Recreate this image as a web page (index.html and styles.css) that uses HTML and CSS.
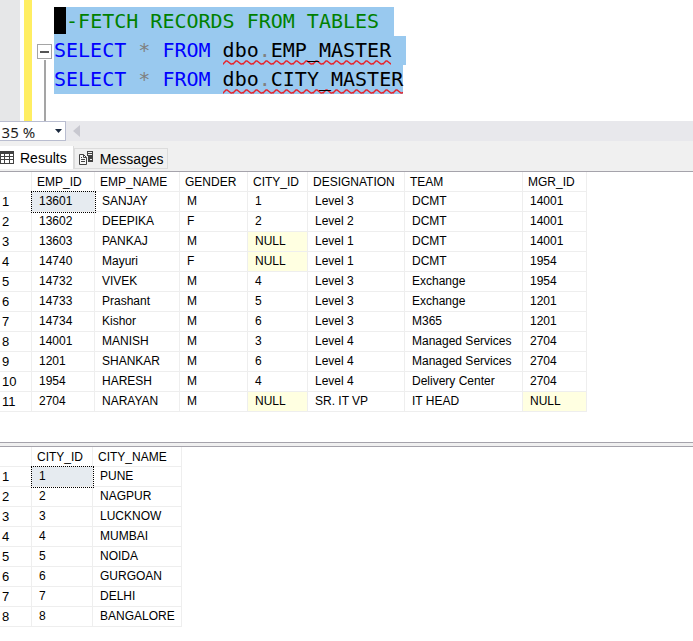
FILE: index.html
```html
<!DOCTYPE html>
<html lang="en">
  <head>
    <meta charset="UTF-8" />
    <meta name="viewport" content="width=device-width, initial-scale=1.0" />
    <title>Query Results</title>
    <link rel="stylesheet" href="styles.css">
  </head>
  <body>
    <!-- editor -->
    <div class="editor">
      <div class="margin"></div>
      <div class="changes"></div>
      <div class="outline">
        <button class="fold" aria-label="Collapse"></button>
        <div class="fold-line"></div>
      </div>
      <div class="code">
        <div class="line"><span class="caret">-</span><span class="comment">-FETCH RECORDS FROM TABLES</span></div>
        <div class="line"><span class="keyword">SELECT</span> <span class="op">*</span> <span class="keyword">FROM</span> <span class="error">dbo<span class="op">.</span>EMP_MASTER</span></div>
        <div class="line last"><span class="keyword">SELECT</span> <span class="op">*</span> <span class="keyword">FROM</span> <span class="error">dbo<span class="op">.</span>CITY_MASTER</span></div>
      </div>
    </div>

    <div class="zoom-bar">
      <select class="zoom" aria-label="Zoom">
        <option>135 %</option>
      </select>
      <button class="scroll-left" aria-label="Scroll left"></button>
    </div>

    <!-- tabs -->
    <div class="tabs">
      <button class="tab active">
        <svg width="14" height="13" viewBox="0 0 14 13">
          <path d="M0 0h14v13H0z" fill="#424242" />
          <path d="M1 3h3v2H1zM5 3h4v2H5zM10 3h3v2h-3zM1 6h3v2H1zM5 6h4v2H5zM10 6h3v2h-3zM1 9h3v3H1zM5 9h4v3H5zM10 9h3v3h-3z" fill="#fff" />
        </svg>
        Results
      </button>
      <button class="tab">
        <svg width="15" height="15" viewBox="0 0 15 15">
          <path d="M8 0h6v11H9V5H8z" fill="#424242" />
          <path d="M9 1.500h4M9 3.500h4" stroke="#f0f0f0" fill="none" />
          <path d="M11 8h2v1h-2z" fill="#f0f0f0" />
          <path d="M.5 3.500h4l3 3v7h-7z" fill="#f6f6f6" stroke="#424242" />
          <path d="M4.500 3.500v3h3M2 8.500h4M2 10.500h4M2 6.500h1" stroke="#424242" fill="none" />
        </svg>
        Messages
      </button>
    </div>

    <!-- results -->
    <div class="pane">
      <table class="grid">
        <colgroup>
          <col class="w-num"><col class="w-emp"><col class="w-name"><col class="w-gender"><col class="w-city"><col class="w-desig"><col class="w-team"><col class="w-mgr">
        </colgroup>
        <thead>
          <tr><th></th><th>EMP_ID</th><th>EMP_NAME</th><th>GENDER</th><th>CITY_ID</th><th>DESIGNATION</th><th>TEAM</th><th>MGR_ID</th></tr>
        </thead>
        <tbody>
          <tr><th>1</th><td class="selected">13601</td><td>SANJAY</td><td>M</td><td>1</td><td>Level 3</td><td>DCMT</td><td>14001</td></tr>
          <tr><th>2</th><td>13602</td><td>DEEPIKA</td><td>F</td><td>2</td><td>Level 2</td><td>DCMT</td><td>14001</td></tr>
          <tr><th>3</th><td>13603</td><td>PANKAJ</td><td>M</td><td class="null">NULL</td><td>Level 1</td><td>DCMT</td><td>14001</td></tr>
          <tr><th>4</th><td>14740</td><td>Mayuri</td><td>F</td><td class="null">NULL</td><td>Level 1</td><td>DCMT</td><td>1954</td></tr>
          <tr><th>5</th><td>14732</td><td>VIVEK</td><td>M</td><td>4</td><td>Level 3</td><td>Exchange</td><td>1954</td></tr>
          <tr><th>6</th><td>14733</td><td>Prashant</td><td>M</td><td>5</td><td>Level 3</td><td>Exchange</td><td>1201</td></tr>
          <tr><th>7</th><td>14734</td><td>Kishor</td><td>M</td><td>6</td><td>Level 3</td><td>M365</td><td>1201</td></tr>
          <tr><th>8</th><td>14001</td><td>MANISH</td><td>M</td><td>3</td><td>Level 4</td><td>Managed Services</td><td>2704</td></tr>
          <tr><th>9</th><td>1201</td><td>SHANKAR</td><td>M</td><td>6</td><td>Level 4</td><td>Managed Services</td><td>2704</td></tr>
          <tr><th>10</th><td>1954</td><td>HARESH</td><td>M</td><td>4</td><td>Level 4</td><td>Delivery Center</td><td>2704</td></tr>
          <tr><th>11</th><td>2704</td><td>NARAYAN</td><td>M</td><td class="null">NULL</td><td>SR. IT VP</td><td>IT HEAD</td><td class="null">NULL</td></tr>
        </tbody>
      </table>
    </div>
    <div class="splitter"></div>
    <div class="pane">
      <table class="grid">
        <colgroup>
          <col class="w-num"><col class="w-id"><col class="w-cname">
        </colgroup>
        <thead>
          <tr><th></th><th>CITY_ID</th><th>CITY_NAME</th></tr>
        </thead>
        <tbody>
          <tr><th>1</th><td class="selected">1</td><td>PUNE</td></tr>
          <tr><th>2</th><td>2</td><td>NAGPUR</td></tr>
          <tr><th>3</th><td>3</td><td>LUCKNOW</td></tr>
          <tr><th>4</th><td>4</td><td>MUMBAI</td></tr>
          <tr><th>5</th><td>5</td><td>NOIDA</td></tr>
          <tr><th>6</th><td>6</td><td>GURGOAN</td></tr>
          <tr><th>7</th><td>7</td><td>DELHI</td></tr>
          <tr><th>8</th><td>8</td><td>BANGALORE</td></tr>
        </tbody>
      </table>
    </div>
  </body>
</html>
```
FILE: styles.css
```css
* {
  box-sizing: border-box;
}

body {
  margin: 0;
  background: #fff;
  color: #000;
  font-family: "Liberation Sans", Arial, sans-serif;
  font-size: 12px;
  overflow-x: hidden;
}

button {
  margin: 0;
  padding: 0;
  background: none;
  border: none;
  font-family: inherit;
}

/* editor */
.editor {
  display: flex;
}

.margin {
  width: 20px;
  background: #e6e7e8;
}

.changes {
  width: 8px;
  margin-left: 4px;
  background: #ffee62;
}

.outline {
  display: flex;
  flex-direction: column;
  width: 22px;
  padding: 44px 0 0 5px;
}

.fold {
  display: flex;
  align-items: center;
  justify-content: center;
  width: 15px;
  height: 15px;
  border: 1px solid #a5a5a5;
  background: #fff;
}

.fold::before {
  content: "";
  width: 9px;
  height: 2px;
  background: #555;
}

.fold-line {
  flex: 1;
  width: 2px;
  margin: 1px 0 0 7px;
  background: #a5a5a5;
}

.code {
  padding: 7px 0 27px;
  font-family: "DejaVu Sans Mono", monospace;
  font-size: 20px;
}

.line {
  width: max-content;
  height: 29px;
  padding-right: 15px;
  line-height: 29px;
  background: #99c9ef;
  white-space: pre;
}

.last {
  padding-right: 0;
}

.caret {
  display: inline-block;
  height: 27px;
  background: #000;
  vertical-align: top;
}

.comment {
  color: #008000;
}

.keyword {
  color: #0000ff;
}

.op {
  color: #808080;
}

.error {
  padding-bottom: 3px;
  background: url("data:image/svg+xml,%3Csvg xmlns='http://www.w3.org/2000/svg' width='10' height='5'%3E%3Cpath d='M-1 5L0 4L3 1H4L8 4H9L11 3' fill='none' stroke='%23e8232a' stroke-width='1.500'/%3E%3C/svg%3E") repeat-x left bottom;
}

/* zoom bar */
.zoom-bar {
  display: flex;
  align-items: center;
  height: 20px;
  background: #e8e8ec;
}

.zoom {
  appearance: none;
  width: 74px;
  height: 20px;
  margin-left: -8px;
  padding: 0;
  border: 1px solid #b9bdd0;
  border-radius: 0;
  background: #fff url("data:image/svg+xml,%3Csvg xmlns='http://www.w3.org/2000/svg' width='7' height='4'%3E%3Cpath d='M0 0h7L3.500 4z' fill='%231b293e'/%3E%3C/svg%3E") no-repeat right 3px center;
  color: #1e1e1e;
  font-family: "Noto Sans", sans-serif;
  font-size: 15px;
}

.scroll-left {
  margin-left: 7px;
  border: solid transparent;
  border-width: 6px 7px 6px 0;
  border-right-color: #c8c8d0;
}

/* tabs */
.tabs {
  display: flex;
  align-items: flex-end;
  height: 31px;
  padding-bottom: 2px;
  border-bottom: 1px solid #a5a3ab;
  background: #f0f0f0;
}

.tab {
  display: flex;
  align-items: center;
  gap: 6px;
  height: 21px;
  padding: 0 3px 0 4px;
  border: 1px solid #dcdcdc;
  font-size: 14px;
  color: #000;
}

.active {
  height: 23px;
  padding: 0 6px 0 0;
  border-width: 0 1px 0 0;
  background: #fff;
}

/* grids */
.grid {
  width: max-content;
  margin-bottom: 30px;
  table-layout: fixed;
  border-collapse: separate;
  border-spacing: 0;
}

.pane:last-child .grid {
  margin-bottom: 0;
}

.grid th,
.grid td {
  height: 20px;
  padding: 0 0 0 7px;
  border: solid #eeeeee;
  border-width: 0 1px 1px 0;
  font-weight: normal;
  line-height: 19px;
  text-align: left;
  white-space: nowrap;
}

.grid thead th {
  padding: 1px 0 0 5px;
  line-height: 18px;
}

.grid tbody th {
  padding: 1px 0 0 2px;
  font-size: 13px;
  line-height: 18px;
}

.grid .null {
  background: #ffffe1;
}

.grid .selected {
  background: #e6ebf0;
  outline: 1px dotted #000;
}

.w-num { width: 32px; }
.w-emp { width: 63px; }
.w-name { width: 85px; }
.w-gender { width: 68px; }
.w-city { width: 60px; }
.w-desig { width: 97px; }
.w-team { width: 118px; }
.w-mgr { width: 64px; }
.w-id { width: 61px; }
.w-cname { width: 89px; }

.splitter {
  height: 5px;
  border: solid #a5a3ab;
  border-width: 1px 0;
  background: #f0f0f0;
}
```
